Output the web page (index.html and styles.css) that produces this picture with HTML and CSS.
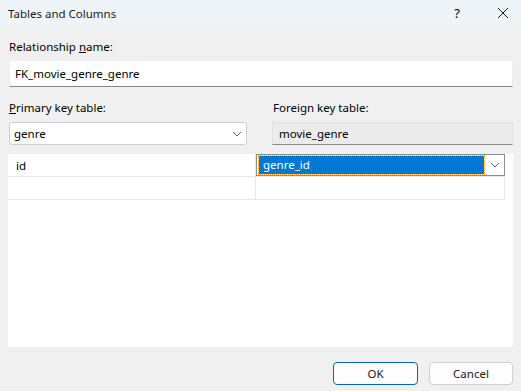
FILE: index.html
```html
<!DOCTYPE html>
<html lang="en">
<head>
    <meta charset="UTF-8">
    <title>Tables and Columns</title>
    <link rel="stylesheet" href="styles.css">
</head>
<body>
    <div class="dialog">
        <div class="titlebar">
            <span class="title">Tables and Columns</span>
            <span class="tb-help">?</span>
            <span class="tb-close">
                <svg width="12" height="12" viewBox="0 0 12 12"><path d="M1 1L11 11M11 1L1 11" stroke="#1a1a1a" stroke-width="1"/></svg>
            </span>
        </div>

        <div class="content">
            <label class="lbl">Relationship <u>n</u>ame:</label>
            <div class="textbox">FK_movie_genre_genre</div>

            <div class="tables">
                <div class="col left">
                    <label class="lbl"><u>P</u>rimary key table:</label>
                    <div class="combo">
                        <span>genre</span>
                        <svg class="chev" width="10" height="6" viewBox="0 0 10 6"><path d="M1 1L5 5L9 1" fill="none" stroke="#606060" stroke-width="1"/></svg>
                    </div>
                </div>
                <div class="col right">
                    <label class="lbl">Foreign key table:</label>
                    <div class="readonly">movie_genre</div>
                </div>
            </div>

            <div class="grid">
                <div class="row">
                    <div class="cell">id</div>
                    <div class="cell edit">
                        <span class="sel">genre_id</span>
                        <svg class="chev" width="10" height="6" viewBox="0 0 10 6"><path d="M1 1L5 5L9 1" fill="none" stroke="#606060" stroke-width="1"/></svg>
                    </div>
                </div>
                <div class="row">
                    <div class="cell"></div>
                    <div class="cell"></div>
                </div>
            </div>

            <div class="buttons">
                <button class="btn default">OK</button>
                <button class="btn">Cancel</button>
            </div>
        </div>
    </div>
</body>
</html>
```

FILE: styles.css
```css
body { margin: 0; font-family: "Noto Sans", "Open Sans", sans-serif; font-size: 11.5px; color: #000; background: #f0f0f0; }
.dialog { width: 521px; height: 391px; background: #f0f0f0; overflow: hidden; }

.titlebar { height: 26px; background: #eff4f9; display: flex; align-items: center; padding-left: 8px; }
.title { flex: 1; color: #1a1a1a; }
.tb-help { width: 14px; text-align: center; font-size: 13px; margin-right: 21px; }
.tb-close { width: 36px; display: flex; justify-content: center; }

.content { padding: 0 8px 0 9px; }
.lbl { display: block; line-height: 16px; }
.content > .lbl { margin-top: 13px; }

.textbox { margin-top: 6px; height: 25px; line-height: 25px; background: #fff; border: 1px solid #ececec; border-bottom-color: #868686; border-top: none; padding-left: 5px; border-radius: 2px 2px 0 0; }

.tables { display: flex; margin-top: 13px; }
.col { display: flex; flex-direction: column; }
.left { width: 238px; }
.right { margin-left: 25px; flex: 1; }
.right .lbl { margin-left: 1px; }
.combo, .readonly { margin-top: 6px; height: 23px; box-sizing: border-box; display: flex; align-items: center; padding-left: 4px; }
.combo { background: #fff; border: 1px solid #d0d0d0; border-radius: 3px; justify-content: space-between; padding-right: 4px; }
.readonly { background: #ebebeb; border: 1px solid #e0e0e0; border-bottom-color: #8a8a8a; padding-left: 6px; }

.grid { margin: 9px 0 0 -1px; height: 193px; background: #fff; padding-right: 8px; }
.row { display: flex; height: 23px; border-bottom: 1px solid #e8e8e8; box-sizing: border-box; }
.cell { width: 248px; display: flex; align-items: center; padding-left: 8px; box-sizing: border-box; border-right: 1px solid #e8e8e8; }
.cell + .cell { flex: 1; }
.cell.edit { padding: 2px 4px 2px 2px; border: 1px solid #8e8e8e; justify-content: space-between; }
.sel { background: #0078d4; color: #fff; outline: 1px dotted #ff9a1a; width: 225px; height: 18px; line-height: 18px; padding-left: 4px; box-sizing: border-box; }

.buttons { display: flex; justify-content: flex-end; gap: 11px; margin-top: 15px; }
.btn { width: 85px; height: 23px; font: inherit; color: #1a1a1a; background: #fdfdfd; border: 1px solid #d0d0d0; border-radius: 4px; }
.btn.default { border-color: #0067c0; }
.btn + .btn { width: 84px; }
```
